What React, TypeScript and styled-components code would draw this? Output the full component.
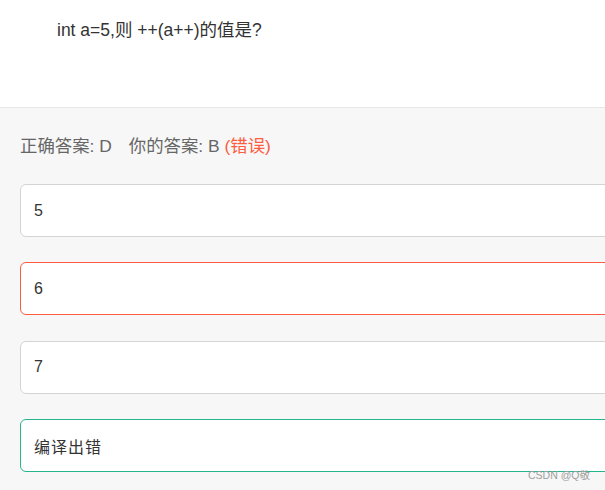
import React from "react";
import styled, { createGlobalStyle } from "styled-components";

const Global = createGlobalStyle`
  html, body { margin: 0; padding: 0; overflow: hidden; background: #f7f7f7; }
  body { font-family: Arial, "Liberation Sans", "Noto Sans CJK SC", sans-serif; }
`;

const Page = styled.div`
  position: relative;
  width: 605px;
  height: 490px;
  overflow: hidden;
  background: #f7f7f7;
`;

const QuestionArea = styled.div`
  background: #fff;
  height: 108px;
  border-bottom: 1px solid #e6e6e6;
  padding: 18px 0 0 57px;
  box-sizing: border-box;
`;

const QuestionText = styled.div`
  font-size: 17.5px;
  line-height: 24px;
  color: #333;
`;

const Body = styled.div`
  padding: 26px 0 0 20px;
  width: 680px;
`;

const Status = styled.div`
  font-size: 17.4px;
  line-height: 24px;
  color: #666;
  margin-bottom: 26px;
`;

const Gap = styled.span`
  display: inline-block;
  width: 17px;
`;

const Wrong = styled.span`
  color: #fd5c3f;
`;

const Options = styled.div`
  display: flex;
  flex-direction: column;
  gap: 25.4px;
`;

const Option = styled.div<{ $state?: "wrong" | "right" }>`
  height: 53px;
  box-sizing: border-box;
  border: 1px solid
    ${(p) => (p.$state === "wrong" ? "#fd5c3f" : p.$state === "right" ? "#25b58d" : "#d4d4d4")};
  border-radius: 6px;
  background: #fff;
  display: flex;
  align-items: center;
  padding-left: 13px;
  font-size: 16px;
  letter-spacing: 1px;
  color: #333;
`;

const Watermark = styled.div`
  position: absolute;
  right: 15px;
  bottom: 8px;
  font-size: 10.5px;
  color: #a0a0a0;
`;

export default function App() {
  return (
    <Page>
      <Global />
      <QuestionArea>
        <QuestionText>int a=5,则 ++(a++)的值是?</QuestionText>
      </QuestionArea>
      <Body>
        <Status>
          正确答案: D<Gap />你的答案: B <Wrong>(错误)</Wrong>
        </Status>
        <Options>
          <Option>5</Option>
          <Option $state="wrong">6</Option>
          <Option>7</Option>
          <Option $state="right">编译出错</Option>
        </Options>
      </Body>
      <Watermark>CSDN @Q敬</Watermark>
    </Page>
  );
}
